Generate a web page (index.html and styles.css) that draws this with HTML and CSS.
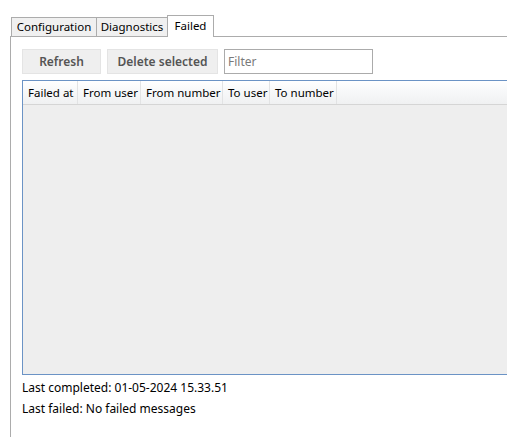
FILE: index.html
```html
<!DOCTYPE html>
<html lang="en">
<head>
  <meta charset="UTF-8">
  <title>Failed messages</title>
  <link rel="stylesheet" href="styles.css">
</head>
<body>
  <!-- Tab strip -->
  <div class="tabstrip">
    <div class="tab tab-config">Configuration</div>
    <div class="tab tab-diag">Diagnostics</div>
    <div class="tab tab-failed selected">Failed</div>
  </div>

  <div class="panel">
    <div class="toolbar">
      <button class="btn btn-refresh">Refresh</button>
      <button class="btn btn-delete">Delete selected</button>
      <input type="text" class="filter" placeholder="Filter">
    </div>

    <!-- Failed messages grid -->
    <div class="grid">
      <div class="grid-header">
        <div class="col col-at">Failed at</div>
        <div class="col col-fromuser">From user</div>
        <div class="col col-fromnum">From number</div>
        <div class="col col-touser">To user</div>
        <div class="col col-tonum">To number</div>
        <div class="col-fill"></div>
      </div>
      <div class="grid-body"></div>
    </div>

    <div class="status">
      <p>Last completed: 01-05-2024 15.33.51</p>
      <p>Last failed: No failed messages</p>
    </div>
  </div>
</body>
</html>
```

FILE: styles.css
```css
body {
  margin: 0;
  background: #fff;
  font-family: "Noto Sans", "Open Sans", sans-serif;
  font-size: 12px;
  color: #000;
  overflow: hidden;
}
.tabstrip {
  display: flex;
  align-items: flex-end;
  height: 21px;
  padding: 15px 0 0 11px;
}
.tab {
  box-sizing: border-box;
  height: 19px;
  line-height: 17px;
  font-size: 11.5px;
  text-align: center;
  background: #f0f0f0;
  border: 1px solid #acacac;
  border-bottom: none;
  border-right: none;
  white-space: nowrap;
}
.tab-config { width: 85px; }
.tab-diag { width: 71px; }
.tab-failed { width: 47px; }
.tab.selected {
  position: relative;
  height: 22px;
  line-height: 19px;
  margin-bottom: -1px;
  background: #fff;
  border-right: 1px solid #acacac;
}
.panel {
  margin-left: 10px;
  min-height: calc(100vh - 37px);
  border-top: 1px solid #acacac;
  border-left: 1px solid #acacac;
  padding: 12px 0 0 11px;
  overflow: hidden;
}
.toolbar {
  display: flex;
  gap: 6px;
  height: 25px;
}
.btn {
  font-family: inherit;
  font-size: 12px;
  font-weight: 600;
  color: #555;
  background: #efefef;
  border: 1px solid #e4e4e4;
  padding: 0;
  height: 25px;
}
.btn-refresh {
  width: 79px;
}
.btn-delete {
  width: 111px;
}
.filter {
  box-sizing: border-box;
  width: 149px;
  height: 25px;
  border: 1px solid #ababab;
  padding: 0 3px;
  font-family: inherit;
  font-size: 12px;
  outline: none;
}
.filter::placeholder {
  color: #7a7a7a;
}
.grid {
  width: calc(100% + 2px);
  height: 293px;
  margin-top: 6px;
  border: 1px solid #6b93c5;
  display: flex;
  flex-direction: column;
}
.grid-header {
  display: flex;
  height: 23px;
  border-bottom: 1px solid #d5d5d5;
  background: linear-gradient(#ffffff, #f7f8f9 45%, #f0f1f2);
}
.col {
  box-sizing: border-box;
  border-right: 1px solid #e2e3e4;
  line-height: 23px;
  font-size: 11.5px;
  padding-left: 5px;
  white-space: nowrap;
  overflow: hidden;
}
.col-at { width: 55px; }
.col-fromuser { width: 63px; }
.col-fromnum { width: 82px; }
.col-touser { width: 47px; }
.col-tonum { width: 67px; }
.col-fill {
  flex: 1;
}
.grid-body {
  flex: 1;
  background: #eeeeee;
}
.status {
  padding-top: 2px;
}
.status p {
  margin: 0;
  line-height: 21px;
}
```
